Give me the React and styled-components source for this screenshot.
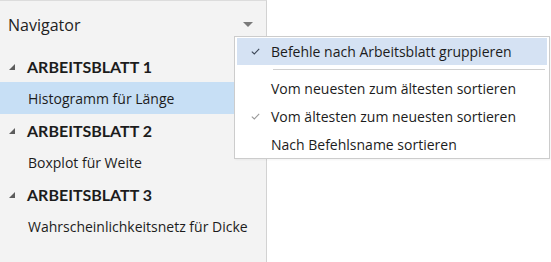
import React from 'react';
import styled, { createGlobalStyle } from 'styled-components';

const GlobalStyle = createGlobalStyle`
  html, body { margin: 0; padding: 0; background: #fff; }
  body { font-family: "Open Sans", "Noto Sans", sans-serif; color: #1c1c1c; }
`;

const Page = styled.div`
  position: relative;
  width: 551px;
  height: 262px;
  display: flex;
  overflow: hidden;
`;

const Panel = styled.div`
  width: 267px;
  height: 262px;
  box-sizing: border-box;
  background: #f3f3f3;
  border-top: 1px solid #dcdcdc;
  border-right: 1px solid #d2d2d2;
  display: flex;
  flex-direction: column;
`;

const Header = styled.div`
  height: 49px;
  display: flex;
  align-items: center;
  justify-content: space-between;
  padding: 0 13px 0 8px;
`;

const Title = styled.div`
  font-size: 16px;
  color: #222;
  margin-top: -1px;
`;

const DropTriangle = styled.span`
  width: 0;
  height: 0;
  border-left: 5px solid transparent;
  border-right: 5px solid transparent;
  border-top: 5px solid #7a7a7a;
  margin-top: -2px;
`;

const Row = styled.div`
  height: 32px;
  display: flex;
  align-items: center;
  padding-left: ${p => (p.group ? '9px' : '28px')};
  background: ${p => (p.selected ? '#c7dff5' : 'transparent')};
  font-family: ${p => (p.group ? '"Lato", "Open Sans", sans-serif' : 'inherit')};
  font-size: ${p => (p.group ? '16px' : '14px')};
  font-weight: ${p => (p.group ? 700 : 400)};
  color: #1c1c1c;
  white-space: nowrap;
`;

const Expander = styled.span`
  width: 0;
  height: 0;
  border-left: 6px solid transparent;
  border-bottom: 6px solid #5c5c5c;
  margin-right: 12px;
  margin-top: 1px;
`;

const Menu = styled.div`
  position: absolute;
  left: 234px;
  top: 36px;
  width: 316px;
  box-sizing: border-box;
  background: #fff;
  border: 1px solid #cccccc;
  padding: 1px 2px 0 2px;
  box-shadow: 1px 1px 2px rgba(0, 0, 0, 0.05);
`;

const MenuItem = styled.div`
  height: ${p => (p.tall ? '27px' : '28px')};
  display: flex;
  align-items: center;
  background: ${p => (p.active ? '#d5e2f3' : 'transparent')};
  font-size: 14px;
  color: #1c1c1c;
  white-space: nowrap;
`;

const CheckSlot = styled.span`
  width: 34px;
  display: flex;
  justify-content: center;
  padding-left: 2px;
  box-sizing: border-box;
`;

const Separator = styled.div`
  height: 1px;
  background: #d0d0d0;
  margin: 4px 2px 4px 36px;
`;

function Check({ light }) {
  return (
    <svg width="9" height="7" viewBox="0 0 9 7">
      <path
        d="M0.8 3.6 L3.3 6 L8.2 0.8"
        fill="none"
        stroke={light ? '#9a9a9a' : '#3c4656'}
        strokeWidth="1.1"
      />
    </svg>
  );
}

const tree = [
  { label: 'ARBEITSBLATT 1', group: true },
  { label: 'Histogramm für Länge', selected: true },
  { label: 'ARBEITSBLATT 2', group: true },
  { label: 'Boxplot für Weite' },
  { label: 'ARBEITSBLATT 3', group: true },
  { label: 'Wahrscheinlichkeitsnetz für Dicke' },
];

export default function App() {
  return (
    <>
      <GlobalStyle />
      <Page>
        <Panel>
          <Header>
            <Title>Navigator</Title>
            <DropTriangle />
          </Header>
          {tree.map(item => (
            <Row key={item.label} group={item.group} selected={item.selected}>
              {item.group && <Expander />}
              {item.label}
            </Row>
          ))}
        </Panel>
        <Menu>
          <MenuItem active tall>
            <CheckSlot><Check /></CheckSlot>
            Befehle nach Arbeitsblatt gruppieren
          </MenuItem>
          <Separator />
          <MenuItem>
            <CheckSlot />
            Vom neuesten zum ältesten sortieren
          </MenuItem>
          <MenuItem>
            <CheckSlot><Check light /></CheckSlot>
            Vom ältesten zum neuesten sortieren
          </MenuItem>
          <MenuItem>
            <CheckSlot />
            Nach Befehlsname sortieren
          </MenuItem>
        </Menu>
      </Page>
    </>
  );
}
